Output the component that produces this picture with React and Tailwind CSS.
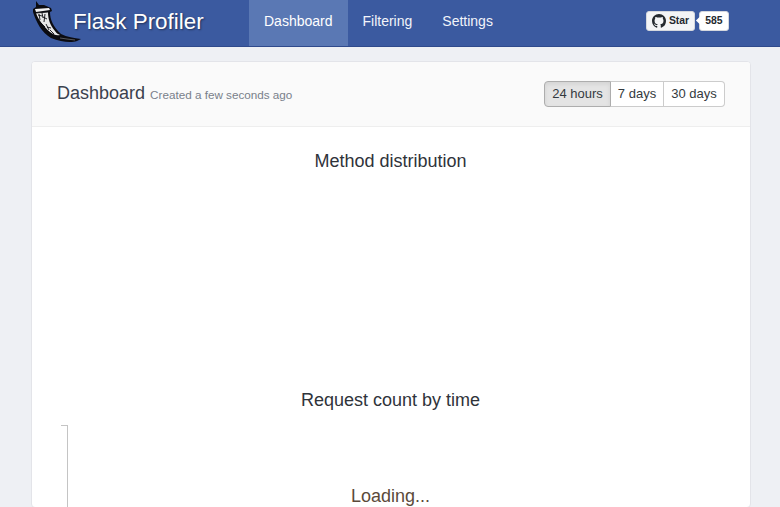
import React from "react";

const FlaskHorn = () => (
  <svg width="52" height="44" viewBox="0 0 52 44" className="block shrink-0">
    <path d="M5 1 L8 5 L13 5 L20 8 L21 11 L19 12 C19 19 22 27 30 34 C36 37 43 38 50 39 L46 41 C40 43 30 42 20 38 C11 33 5 22 2 12 L2 9 L5 7 Z" fill="#0b0b10" />
    <path d="M4 9 L18 8 L19 10 L5 12 Z" fill="#f2f2f2" />
    <path d="M5 13 L17 12 C17 19 19 25 24 31 C25 33 27 34 29 35 C25 36 22 34 19 32 C12 26 7 19 5 13 Z" fill="#e8e8e8" />
    <path d="M8 14 L9 20 M11 13 L12 18 M14 14 L13 22 M9 22 L14 27 M15 24 L18 30 M12 17 L16 19 M7 15 L11 16 M5 13 L17 12 M19 30 L23 34 M16 27 L20 28" stroke="#0b0b10" strokeWidth="0.9" fill="none" />
    <path d="M29 38 L36 39 L44 40" stroke="#8a8a8a" strokeWidth="0.6" fill="none" />
  </svg>
);

const GitHubMark = () => (
  <svg width="14" height="14" viewBox="0 0 16 16" fill="#24292f" className="block shrink-0">
    <path d="M8 0C3.58 0 0 3.58 0 8c0 3.54 2.29 6.53 5.47 7.59.4.07.55-.17.55-.38 0-.19-.01-.82-.01-1.49-2.01.37-2.53-.49-2.69-.94-.09-.23-.48-.94-.82-1.13-.28-.15-.68-.52-.01-.53.63-.01 1.08.58 1.23.82.72 1.21 1.87.87 2.33.66.07-.52.28-.87.51-1.07-1.78-.2-3.64-.89-3.64-3.95 0-.87.31-1.59.82-2.15-.08-.2-.36-1.02.08-2.12 0 0 .67-.21 2.2.82.64-.18 1.32-.27 2-.27s1.36.09 2 .27c1.53-1.04 2.2-.82 2.2-.82.44 1.1.16 1.92.08 2.12.51.56.82 1.27.82 2.15 0 3.07-1.87 3.75-3.65 3.95.29.25.54.73.54 1.48 0 1.07-.01 1.93-.01 2.2 0 .21.15.46.55.38A8.01 8.01 0 0 0 16 8c0-4.42-3.58-8-8-8z" />
  </svg>
);

export default function App() {
  return (
    <div className="h-[507px] overflow-hidden bg-[#eef0f4] text-[#212529] font-['Liberation_Sans',Arial,sans-serif]">
      <nav className="h-[47px] bg-[#3b5aa0] border-b border-[#2f4a8c] flex items-start pl-[31px]">
        <div className="w-[218px] h-[44px] flex items-center overflow-hidden">
          <FlaskHorn />
          <span className="ml-[-10px] text-[22.4px] text-white [text-shadow:1px_1px_2px_rgba(0,0,0,0.45)]">Flask Profiler</span>
        </div>
        <div className="flex text-[14px] text-white">
          <span className="h-[46px] px-[15px] pb-[4px] flex items-center bg-[#5a78b4]">Dashboard</span>
          <span className="h-[46px] px-[15px] pb-[4px] flex items-center text-[#f2f4fa]">Filtering</span>
          <span className="h-[46px] px-[15px] pb-[4px] flex items-center text-[#f2f4fa]">Settings</span>
        </div>
        <div className="ml-[138px] mt-[11px] flex items-center text-[10.4px] font-bold text-[#24292f]">
          <span className="h-[20px] w-[49px] flex items-center gap-[3px] pl-[5px] bg-[#f3f4f6] border border-[#d5d8de] rounded-[3px]">
            <GitHubMark />
            Star
          </span>
          <span className="relative ml-[4px] h-[20px] w-[30px] flex items-center justify-center bg-white border border-[#d5d8de] rounded-[3px]">
            <span className="absolute left-[-3px] top-[6px] w-[5px] h-[5px] rotate-45 bg-white" />
            585
          </span>
        </div>
      </nav>

      <main className="pl-[31px] pt-[14px]">
        <section className="w-[720px] bg-white border border-[#e3e4e9] rounded-[4px] overflow-hidden">
          <header className="h-[65px] bg-[#fafafa] border-b border-[#eeeeee] flex items-center justify-between pl-[25px] pr-[25px]">
            <div className="flex items-baseline pb-[2px]">
              <span className="text-[18px] text-[#3a414e]">Dashboard</span>
              <span className="ml-[5px] text-[11.7px] text-[#79808a]">Created a few seconds ago</span>
            </div>
            <div className="flex h-[26px] text-[13px] text-[#343a40]">
              <span className="w-[67px] pb-[1px] flex items-center justify-center bg-[#e4e4e4] border border-[#adadad] rounded-l-[4px] shadow-[inset_0_2px_4px_rgba(0,0,0,0.08)]">24 hours</span>
              <span className="w-[53px] pb-[1px] flex items-center justify-center bg-white border-y border-r border-[#cccccc]">7 days</span>
              <span className="w-[61px] pb-[1px] flex items-center justify-center bg-white border-y border-r border-[#cccccc] rounded-r-[4px]">30 days</span>
            </div>
          </header>
          <div className="h-[380px]">
            <h2 className="pt-[24px] pr-[1px] text-center text-[18px] leading-[20px] text-[#2f333a]">Method distribution</h2>
            <h2 className="mt-[219px] pr-[1px] text-center text-[18px] leading-[20px] text-[#2f333a]">Request count by time</h2>
            <div className="relative mt-[15px] ml-[29px] h-[82px]">
              <div className="w-[7px] h-[82px] border-t border-r border-[#c4c4c4]" />
              <div className="absolute left-0 right-[30px] top-[61px] text-center text-[18px] leading-[20px] text-[#5b4a3a]">Loading...</div>
            </div>
          </div>
        </section>
      </main>
    </div>
  );
}
